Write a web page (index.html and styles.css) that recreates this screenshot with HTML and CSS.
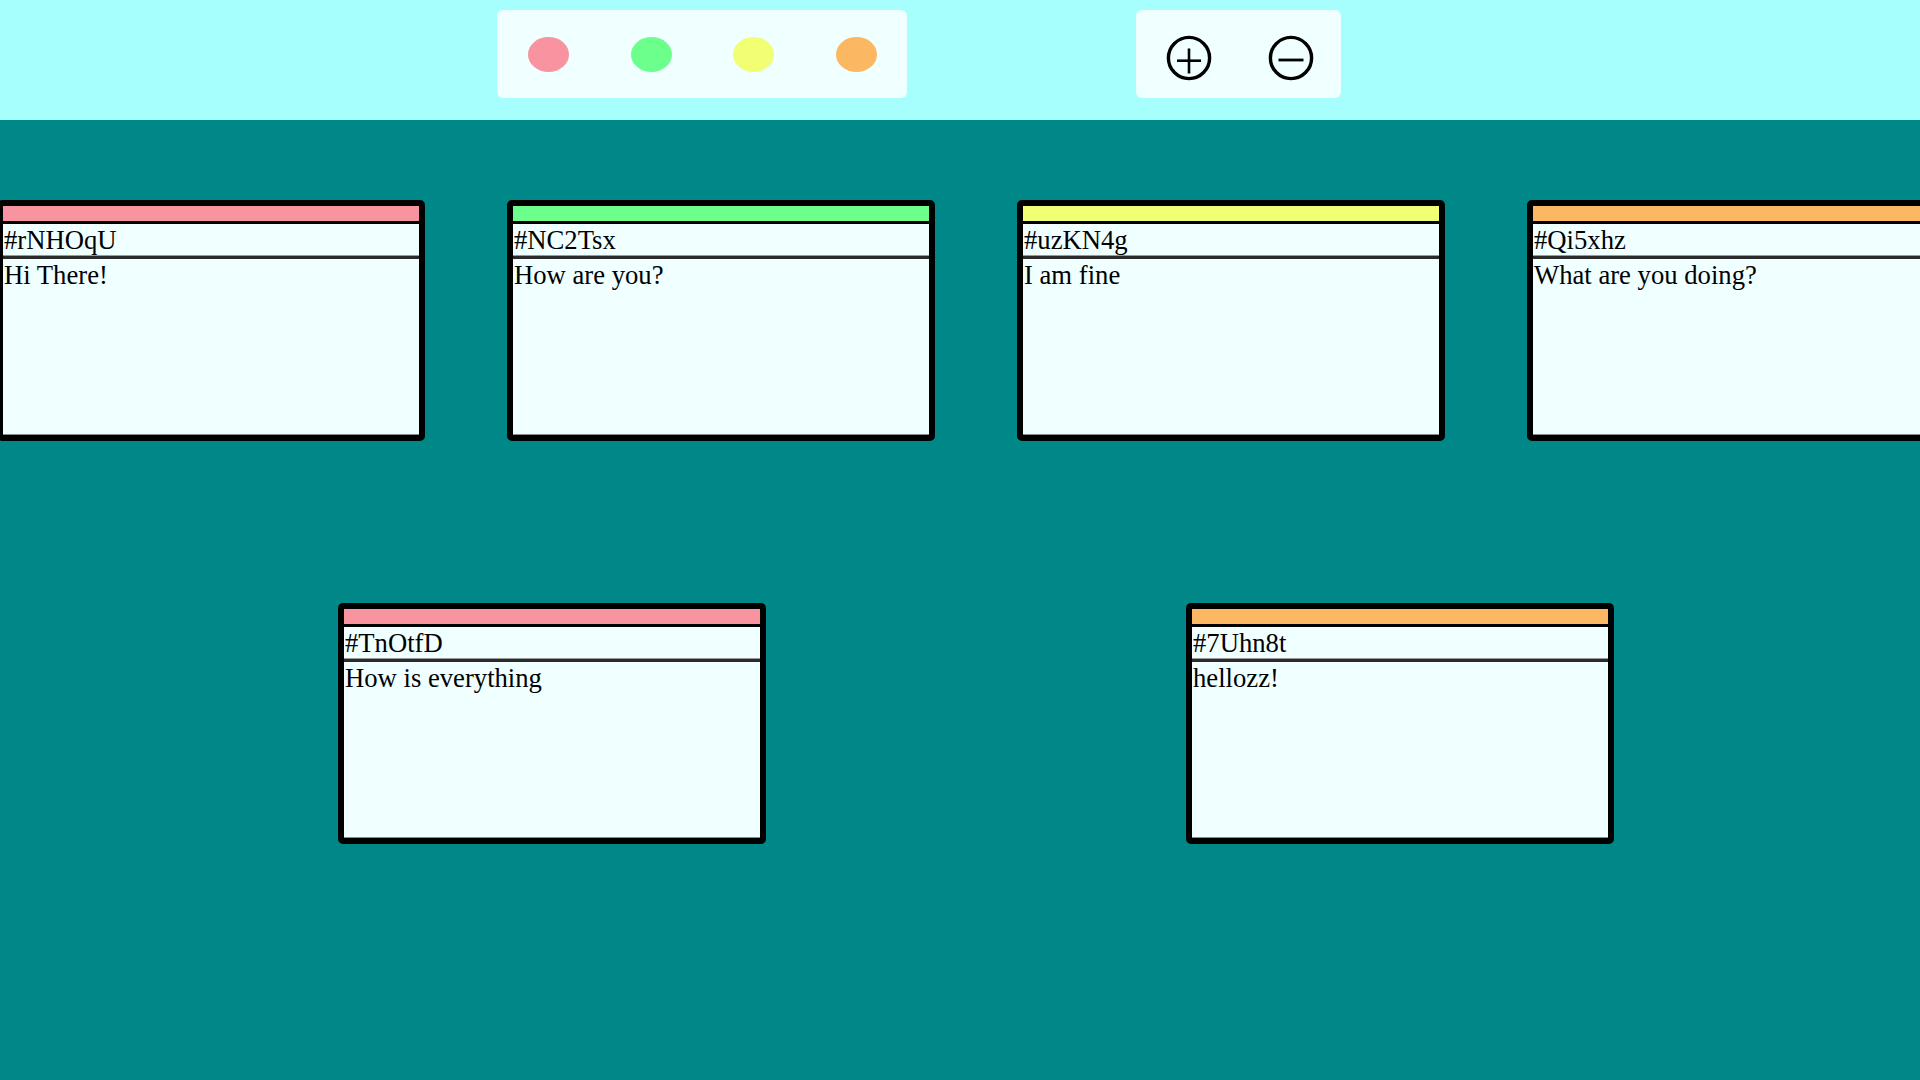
FILE: index.html
```html
<!DOCTYPE html>
<html lang="en">
<head>
<meta charset="utf-8">
<title>Sticky Notes</title>
<link rel="stylesheet" href="styles.css">
</head>
<body>
<header class="topbar">
  <div class="toolbox palette">
    <span class="dot dot-pink"></span>
    <span class="dot dot-green"></span>
    <span class="dot dot-yellow"></span>
    <span class="dot dot-orange"></span>
  </div>
  <div class="toolbox zoom">
    <svg class="zicon" viewBox="0 0 46 46" width="46" height="46" aria-label="zoom in">
      <circle cx="23" cy="23" r="20.6" fill="none" stroke="#000" stroke-width="3.4"/>
      <line x1="11" y1="25.7" x2="35" y2="25.7" stroke="#000" stroke-width="2.6"/>
      <line x1="23" y1="13.5" x2="23" y2="38.5" stroke="#000" stroke-width="2.6"/>
    </svg>
    <svg class="zicon" viewBox="0 0 46 46" width="46" height="46" aria-label="zoom out">
      <circle cx="23" cy="23" r="20.6" fill="none" stroke="#000" stroke-width="3.4"/>
      <line x1="10.5" y1="25" x2="35.5" y2="25" stroke="#000" stroke-width="2.8"/>
    </svg>
  </div>
</header>
<main class="board">
  <div class="note n1">
    <div class="stripe pink"></div>
    <div class="title">#rNHOqU</div>
    <div class="body">Hi There!</div>
  </div>
  <div class="note n2">
    <div class="stripe green"></div>
    <div class="title">#NC2Tsx</div>
    <div class="body">How are you?</div>
  </div>
  <div class="note n3">
    <div class="stripe yellow"></div>
    <div class="title">#uzKN4g</div>
    <div class="body">I am fine</div>
  </div>
  <div class="note n4">
    <div class="stripe orange"></div>
    <div class="title">#Qi5xhz</div>
    <div class="body">What are you doing?</div>
  </div>
  <div class="note n5">
    <div class="stripe pink"></div>
    <div class="title">#TnOtfD</div>
    <div class="body">How is everything</div>
  </div>
  <div class="note n6">
    <div class="stripe orange"></div>
    <div class="title">#7Uhn8t</div>
    <div class="body">hellozz!</div>
  </div>
</main>
</body>
</html>
```
FILE: styles.css
```css
html, body {
  margin: 0;
  padding: 0;
  height: 100%;
  overflow: hidden;
}

body {
  background: #008787;
  font-family: "Liberation Serif", "Times New Roman", serif;
}

.topbar {
  height: 120px;
  box-sizing: border-box;
  background: #a6fffd;
  display: flex;
  align-items: flex-start;
  padding: 10px 0 0 497px;
  gap: 229px;
}

.toolbox {
  height: 88px;
  box-sizing: border-box;
  background: #f0ffff;
  border-radius: 6px;
  display: flex;
  align-items: center;
  justify-content: space-between;
}

.palette {
  width: 410px;
  padding: 0 30px 0 31px;
}

.dot {
  width: 41px;
  height: 35px;
  border-radius: 50%;
  margin-top: 1px;
}

.dot-pink, .pink { background: #f8949f; }
.dot-green, .green { background: #6cff8b; }
.dot-yellow, .yellow { background: #f1ff72; }
.dot-orange, .orange { background: #fbb761; }

.zoom {
  width: 205px;
  padding: 0 27px 0 30px;
}

.zicon {
  display: block;
  margin-top: 8px;
}

.board {
  position: relative;
  height: 960px;
}

.note {
  position: absolute;
  width: 428px;
  height: 241px;
  box-sizing: border-box;
  border: 6px solid #000;
  border-radius: 5px;
  background: #000;
  display: flex;
  flex-direction: column;
}

.n1 { left: -3px; top: 80px; }
.n2 { left: 507px; top: 80px; }
.n3 { left: 1017px; top: 80px; }
.n4 { left: 1527px; top: 80px; }
.n5 { left: 338px; top: 483px; }
.n6 { left: 1186px; top: 483px; }

.stripe {
  height: 15px;
  flex: none;
  margin-bottom: 3px;
}

.title {
  height: 32px;
  flex: none;
  box-sizing: border-box;
  background: #f0ffff;
  padding: 1px 1px 0 1px;
  font-size: 26.67px;
  line-height: 30px;
  color: #000;
  border-bottom: 1px solid #9a9a9a;
}

.body {
  flex: 1;
  box-sizing: border-box;
  background: #f0ffff;
  border-top: 3px solid #2b2b2b;
  border-bottom: 1px solid #8a8a8a;
  padding: 1px 1px 0 1px;
  font-size: 26.67px;
  line-height: 30px;
  color: #000;
}
```
